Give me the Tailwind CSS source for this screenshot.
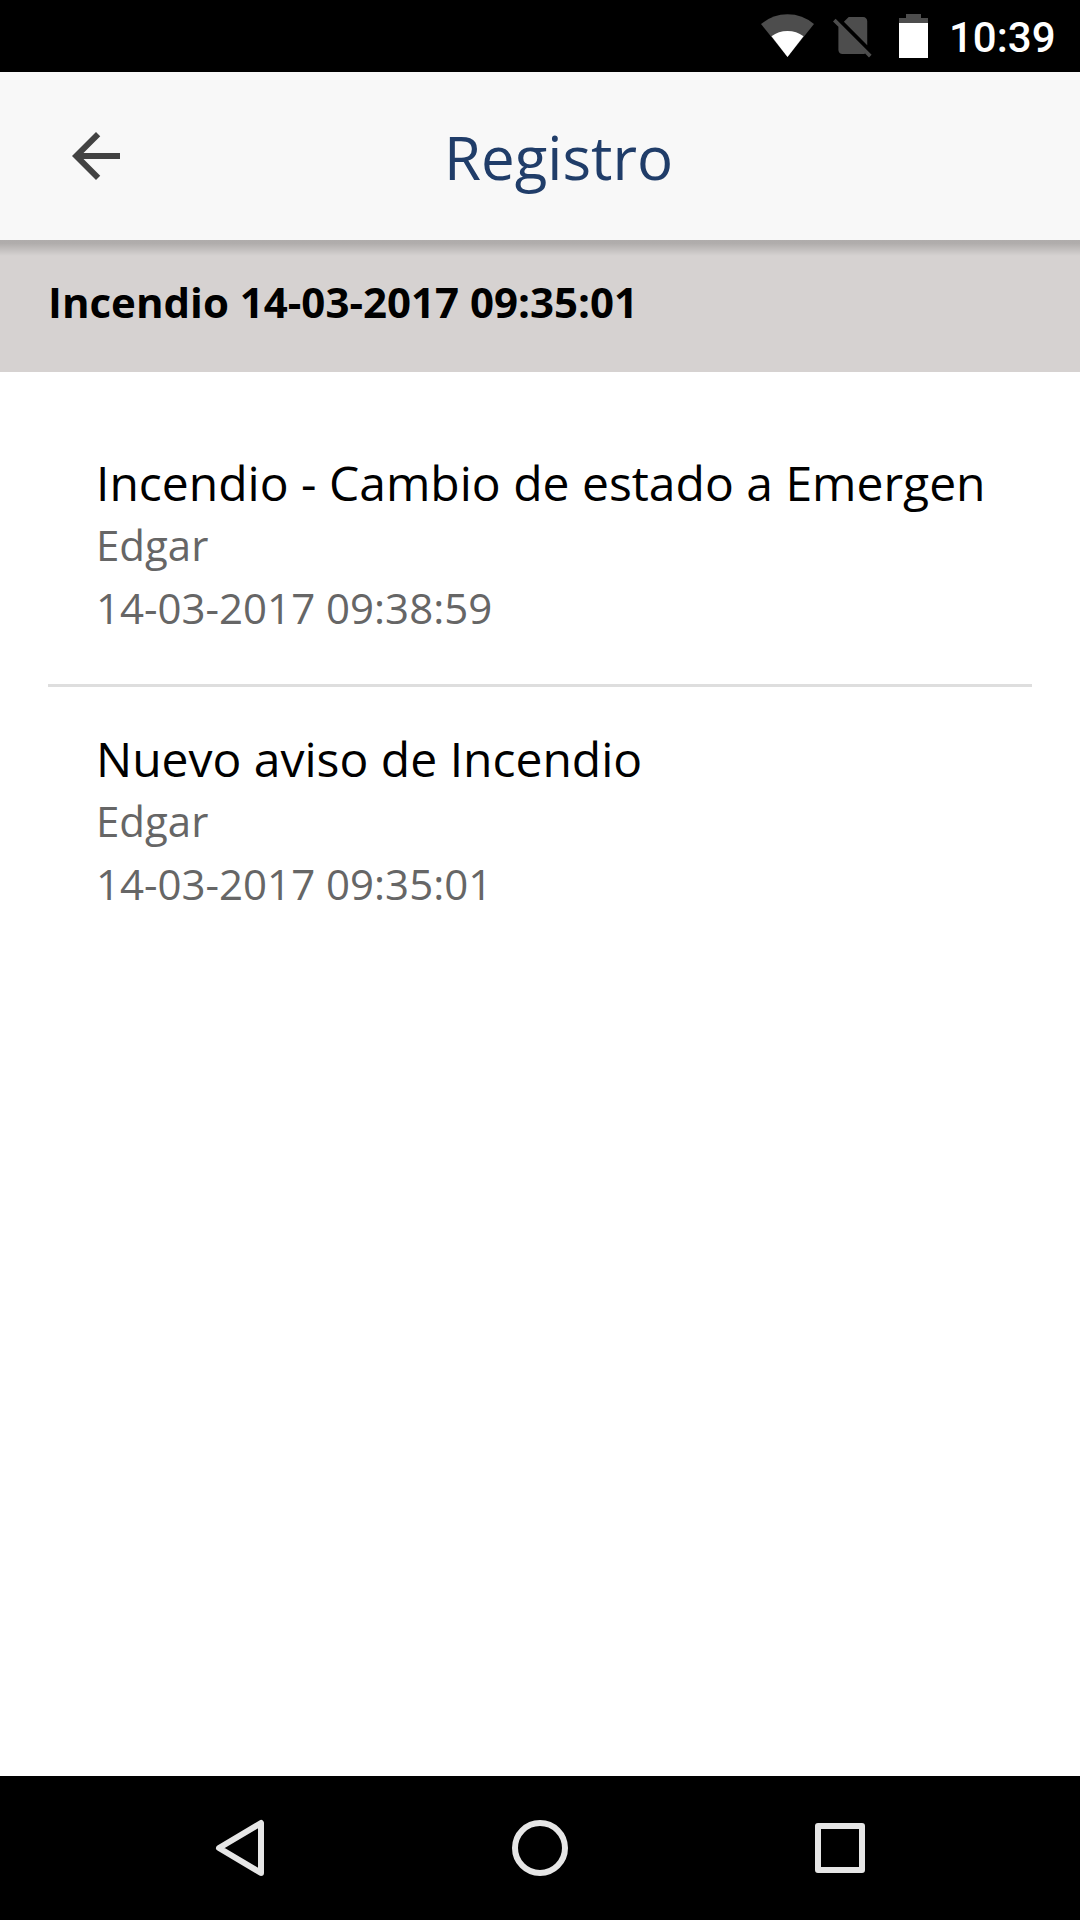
<!DOCTYPE html>
<html lang="es">
<head>
    <meta charset="UTF-8">
    <meta name="viewport" content="width=device-width, initial-scale=1.0">
    <title>Registro</title>
    <script src="https://cdn.jsdelivr.net/npm/@tailwindcss/browser@4"></script>
</head>
<body class="bg-white font-['Open_Sans',sans-serif]">
    <div class="w-[1080px] h-[1920px] flex flex-col overflow-hidden">
        <!-- Status bar -->
        <div class="h-[72px] shrink-0 bg-black flex items-start justify-end pr-[24px] text-white">
            <svg class="w-[55px] h-[72px] mr-[17px]" viewBox="0 0 55 72">
                <path d="M27.5 57 L1 24 Q12.5 14.2 27.5 14.2 T54 24 Z" fill="#4d4d4d"/>
                <path d="M27.5 57 L11.5 36.2 Q18.5 31 27.5 31 T43.5 36.2 Z" fill="#fff"/>
            </svg>
            <svg class="w-[40px] h-[72px] mr-[27px]" viewBox="0 0 40 72">
                <path transform="translate(-3.9 10.8) scale(2.06)" fill="#4d4d4d" d="M18.99 5c0-1.1-.89-2-1.99-2h-7L7.66 5.34 19 16.68 18.99 5zM3.65 3.88L2.38 5.15 5 7.77V19c0 1.1.9 2 2 2h10.01c.35 0 .67-.1.96-.26l1.88 1.88 1.27-1.27L3.65 3.88z"/>
            </svg>
            <svg class="w-[29px] h-[72px] mr-[21px]" viewBox="0 0 29 72">
                <path d="M7 14 H22 V18 H29 V23 H0 V18 H7 Z" fill="#4d4d4d"/>
                <path d="M0 23 H29 V58 H0 Z" fill="#fff"/>
            </svg>
            <span class="w-[107px] pt-[2px] font-[Roboto,sans-serif] font-medium text-[42px] leading-[72px]">10:39</span>
        </div>

        <!-- Toolbar -->
        <header class="relative z-10 h-[168px] shrink-0 bg-[#f8f8f8] flex items-center pl-[72px]">
            <svg class="w-[48px] h-[48px]" viewBox="4 4 16 16" fill="#424242">
                <path d="M20 11H7.83l5.59-5.59L12 4l-8 8 8 8 1.41-1.41L7.83 13H20v-2z"/>
            </svg>
            <h1 class="ml-[324px] mt-[2px] text-[60px] leading-none text-[#203d69]">Registro</h1>
            <div class="absolute inset-x-0 top-full h-[16px] bg-linear-to-b from-black/18 from-20% to-transparent"></div>
        </header>

        <main class="flex-1">
            <h2 class="h-[132px] bg-[#d6d2d1] pl-[48px] pt-[30px] text-[42px] leading-[63px] font-bold">Incendio 14-03-2017 09:35:01</h2>
            <ul class="px-[48px] pt-[48px]">
                <li class="h-[267px] px-[48px] pt-[32px] border-b-3 border-[#dedede]">
                    <h3 class="-mb-px text-[48px] leading-[62px] whitespace-nowrap">Incendio - Cambio de estado a Emergen</h3>
                    <p class="text-[42px] leading-[63px] text-[#666]">Edgar</p>
                    <p class="text-[42px] leading-[63px] text-[#666]">14-03-2017 09:38:59</p>
                </li>
                <li class="px-[48px] pt-[41px]">
                    <h3 class="-mb-px text-[48px] leading-[62px]">Nuevo aviso de Incendio</h3>
                    <p class="text-[42px] leading-[63px] text-[#666]">Edgar</p>
                    <p class="text-[42px] leading-[63px] text-[#666]">14-03-2017 09:35:01</p>
                </li>
            </ul>
        </main>

        <!-- Navigation bar -->
        <nav class="h-[144px] shrink-0 bg-black flex items-center justify-between px-[210px]">
            <svg class="w-[60px] h-[60px]" viewBox="0 0 60 60" fill="none" stroke="#e6e6e6" stroke-width="6" stroke-linejoin="round">
                <path d="M51 5 V55 L9 30 Z"/>
            </svg>
            <svg class="w-[60px] h-[60px]" viewBox="0 0 60 60" fill="none" stroke="#e6e6e6" stroke-width="6">
                <circle cx="30" cy="30" r="25"/>
            </svg>
            <svg class="w-[60px] h-[60px]" viewBox="0 0 60 60" fill="none" stroke="#e6e6e6" stroke-width="6" stroke-linejoin="round">
                <rect x="8" y="8" width="44" height="44"/>
            </svg>
        </nav>
    </div>
</body>
</html>
